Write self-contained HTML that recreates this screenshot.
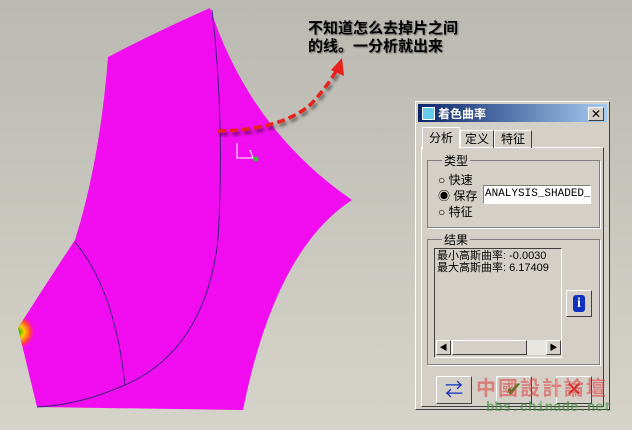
<!DOCTYPE html>
<html><head><meta charset="utf-8"><style>
body{margin:0;width:632px;height:430px;overflow:hidden;background:linear-gradient(#bab9b2,#d6d4ca);font-family:"Liberation Sans","Noto Sans CJK SC",sans-serif;position:relative}
.abs{position:absolute}
.dlg{left:415px;top:101px;width:195px;height:309px;background:#d4d0c8;border:1px solid #fff;border-right-color:#404040;border-bottom-color:#404040;box-sizing:border-box}
.t{font-size:12px;color:#000}
.grp{border:1px solid #808080;box-shadow:1px 1px 0 #fff}
.sunk{background:#fff;border:1px solid #808080;border-right-color:#fff;border-bottom-color:#fff;box-sizing:border-box}
.btn{background:#d4d0c8;border:1px solid #fff;border-right-color:#404040;border-bottom-color:#404040;box-sizing:border-box}
</style></head><body>
<svg class="abs" style="left:0;top:0" width="632" height="430">
<defs><radialGradient id="rb" cx="18" cy="332" r="18" gradientUnits="userSpaceOnUse"><stop offset="0" stop-color="#00c000"/><stop offset=".35" stop-color="#ffcc00"/><stop offset=".7" stop-color="#ff4040"/><stop offset="1" stop-color="#ff00ff" stop-opacity="0"/></radialGradient>
<filter id="sh"><feDropShadow dx="2" dy="3" stdDeviation="1.5" flood-opacity=".5"/></filter>
<filter id="sh2"><feDropShadow dx="1" dy="1" stdDeviation="0.8" flood-opacity=".4"/></filter></defs>
<path d="M108,57 Q160,30 210,8 Q250,130 352,200 Q275,250 243,410 L37,407 L18,328 Q55,270 75,240 Q100,160 108,57Z" fill="#f20cf0"/>
<path d="M108,57 Q160,30 210,8 Q250,130 352,200 Q275,250 243,410 L37,407 L18,328 Q55,270 75,240 Q100,160 108,57Z" fill="url(#rb)"/>
<path d="M212,10 Q225,120 218,240 Q205,350 125,385 Q80,405 37,407" fill="none" stroke="#402080" stroke-width="1"/>
<path d="M75,242 Q115,290 125,385" fill="none" stroke="#402080" stroke-width="1"/>
<path d="M218,131 Q280,130 310,105 Q325,90 338,68" fill="none" stroke="#e8201c" stroke-width="3.5" stroke-dasharray="8,4" filter="url(#sh)"/>
<path d="M331,70 L342,58 L344,76Z" fill="#e8201c"/>
<path d="M237,143 V158 L253,158 L250,150" fill="none" stroke="#fff" stroke-width="1"/>
<circle cx="256" cy="159" r="2.5" fill="#30c030"/>
<text x="308" y="33" font-size="15" font-weight="bold" filter="url(#sh2)" font-family="Noto Sans CJK SC,sans-serif">不知道怎么去掉片之间</text>
<text x="308" y="51" font-size="15" font-weight="bold" filter="url(#sh2)" font-family="Noto Sans CJK SC,sans-serif">的线。一分析就出来</text>
</svg>
<div class="abs dlg">
 <div class="abs" style="left:2px;top:2px;width:189px;height:18px;background:linear-gradient(90deg,#0a246a,#a6caf0)"></div>
 <div class="abs" style="left:6px;top:5px;width:11px;height:11px;background:#6ce;border:1px solid #fff"></div>
 <div class="abs" style="left:22px;top:3px;font-size:12px;color:#fff;font-weight:bold">着色曲率</div>
 <div class="abs btn" style="left:172px;top:5px;width:16px;height:14px;font-size:12px;line-height:12px;text-align:center">✕</div>
 <div class="abs" style="left:5px;top:45px;width:181px;height:258px;border:1px solid #fff;border-right-color:#404040;border-bottom-color:#404040"></div>
 <div class="abs t" style="left:6px;top:25px;width:36px;height:21px;border:1px solid #fff;border-bottom:none;background:#d4d0c8;text-align:center;line-height:20px">分析</div>
 <div class="abs t" style="left:44px;top:28px;width:32px;height:17px;border:1px solid #fff;border-right-color:#404040;border-bottom:none;text-align:center;line-height:17px">定义</div>
 <div class="abs t" style="left:78px;top:28px;width:36px;height:17px;border:1px solid #fff;border-right-color:#404040;border-bottom:none;text-align:center;line-height:17px">特征</div>
 <div class="abs grp" style="left:11px;top:58px;width:171px;height:66px"></div>
 <div class="abs t" style="left:26px;top:50px;background:#d4d0c8;padding:0 2px">类型</div>
 <div class="abs t" style="left:22px;top:69px">○ 快速</div>
 <div class="abs t" style="left:22px;top:85px">◉ 保存</div>
 <div class="abs t" style="left:22px;top:101px">○ 特征</div>
 <div class="abs sunk" style="left:67px;top:83px;width:108px;height:19px;font-family:'Liberation Mono',monospace;font-size:11px;line-height:17px;overflow:hidden;white-space:nowrap;padding-left:1px">ANALYSIS_SHADED_1</div>
 <div class="abs grp" style="left:11px;top:137px;width:171px;height:124px"></div>
 <div class="abs t" style="left:26px;top:129px;background:#d4d0c8;padding:0 2px">结果</div>
 <div class="abs sunk" style="left:18px;top:146px;width:128px;height:110px;background:#d4d0c8;border-color:#404040 #fff #fff #404040"></div>
 <div class="abs t" style="left:21px;top:148px;font-size:11px;line-height:12px;white-space:nowrap;width:124px;overflow:hidden">最小高斯曲率: -0.0030<br>最大高斯曲率: 6.17409</div>
 <div class="abs" style="left:20px;top:238px;width:125px;height:15px;background:#e8e6e0"></div>
 <div class="abs btn" style="left:20px;top:238px;width:15px;height:15px;font-size:8px;text-align:center;line-height:13px">◀</div>
 <div class="abs btn" style="left:36px;top:238px;width:75px;height:15px"></div>
 <div class="abs btn" style="left:130px;top:238px;width:15px;height:15px;font-size:8px;text-align:center;line-height:13px">▶</div>
 <div class="abs btn" style="left:150px;top:188px;width:26px;height:27px"><div style="margin:4px auto;width:12px;height:17px;background:#1030c0;border-radius:3px;color:#fff;font:bold 14px 'Liberation Serif',serif;text-align:center;line-height:17px">i</div></div>
 <div class="abs btn" style="left:20px;top:274px;width:36px;height:28px;color:#1030c0;font-size:18px;text-align:center;line-height:26px">⇄</div>
 <div class="abs btn" style="left:80px;top:274px;width:36px;height:28px;color:#3a8a20;font-size:20px;text-align:center;line-height:26px">✔</div>
 <div class="abs btn" style="left:140px;top:274px;width:36px;height:28px;color:#d02020;font-size:20px;text-align:center;line-height:26px">✕</div>
</div>
<div class="abs" style="left:476px;top:372px;font-size:20px;font-weight:bold;color:rgba(220,60,60,.55);letter-spacing:2px">中國設計論壇</div>
<div class="abs" style="left:486px;top:400px;font:bold 14px 'Liberation Mono',monospace;color:rgba(60,140,60,.6)">bbs.chinade.net</div>
</body></html>
